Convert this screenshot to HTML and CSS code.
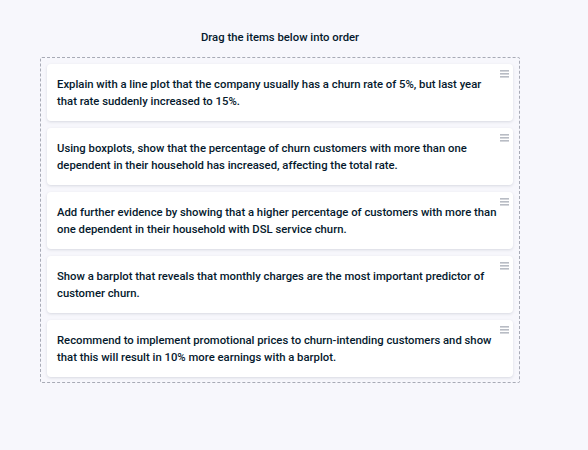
FILE: index.html
```html
<!DOCTYPE html>
<html>
<head>
<meta charset="utf-8">
<link rel="stylesheet" href="styles.css">
</head>
<body>
<div class="wrap">
  <div class="title">Drag the items below into order</div>
  <div class="list">
    <div class="card">
      <p class="text">Explain with a line plot that the company usually has a churn rate of 5%, but last year that rate suddenly increased to 15%.</p>
      <svg class="handle" width="9" height="8" viewBox="0 0 9 8"><rect y="0" width="9" height="1.6"/><rect y="3" width="9" height="1.6"/><rect y="6" width="9" height="1.6"/></svg>
    </div>
    <div class="card">
      <p class="text">Using boxplots, show that the percentage of churn customers with more than one dependent in their household has increased, affecting the total rate.</p>
      <svg class="handle" width="9" height="8" viewBox="0 0 9 8"><rect y="0" width="9" height="1.6"/><rect y="3" width="9" height="1.6"/><rect y="6" width="9" height="1.6"/></svg>
    </div>
    <div class="card">
      <p class="text">Add further evidence by showing that a higher percentage of customers with more than one dependent in their household with DSL service churn.</p>
      <svg class="handle" width="9" height="8" viewBox="0 0 9 8"><rect y="0" width="9" height="1.6"/><rect y="3" width="9" height="1.6"/><rect y="6" width="9" height="1.6"/></svg>
    </div>
    <div class="card">
      <p class="text">Show a barplot that reveals that monthly charges are the most important predictor of customer churn.</p>
      <svg class="handle" width="9" height="8" viewBox="0 0 9 8"><rect y="0" width="9" height="1.6"/><rect y="3" width="9" height="1.6"/><rect y="6" width="9" height="1.6"/></svg>
    </div>
    <div class="card">
      <p class="text">Recommend to implement promotional prices to churn-intending customers and show that this will result in 10% more earnings with a barplot.</p>
      <svg class="handle" width="9" height="8" viewBox="0 0 9 8"><rect y="0" width="9" height="1.6"/><rect y="3" width="9" height="1.6"/><rect y="6" width="9" height="1.6"/></svg>
    </div>
  </div>
</div>
</body>
</html>
```
FILE: styles.css
```css
html, body {
  margin: 0;
  padding: 0;
  background: #f7f7fc;
}
body {
  font-family: Roboto, "Liberation Sans", sans-serif;
  font-weight: 500;
  font-size: 11.3px;
  color: #05192d;
}
.wrap {
  width: 480px;
  margin-left: 40px;
  padding-top: 29px;
}
.title {
  text-align: center;
  line-height: 17px;
  height: 17px;
  margin-bottom: 11px;
}
.list {
  border: 1px dashed #a8abb6;
  border-radius: 2px;
  padding: 6px 6px 5px 6px;
  display: flex;
  flex-direction: column;
  gap: 7px;
}
.card {
  position: relative;
  background: #ffffff;
  border-radius: 4px;
  box-shadow: 0 1px 3px rgba(5, 25, 45, 0.13);
  padding: 12px 13px 11px 10px;
  min-height: 34px;
}
.text {
  margin: 0;
  line-height: 17px;
}
.handle {
  position: absolute;
  top: 6px;
  right: 4px;
  fill: #b8bcc4;
}
```
